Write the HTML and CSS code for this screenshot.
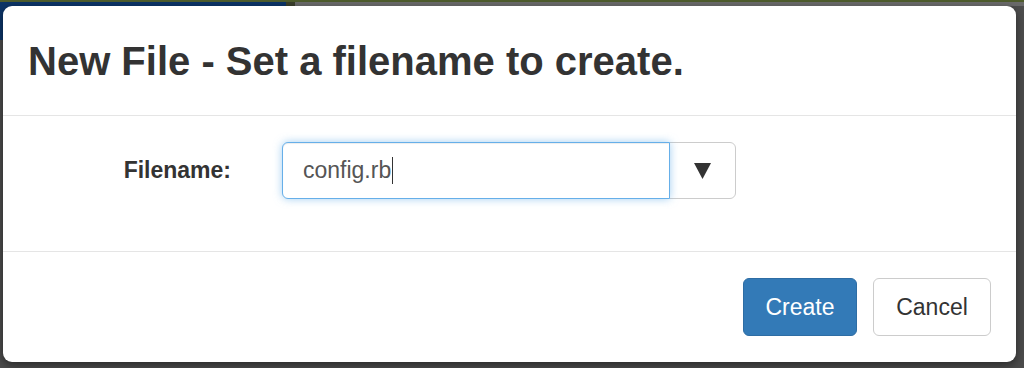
FILE: index.html
```html
<!DOCTYPE html>
<html lang="en">
<head>
    <meta charset="UTF-8">
    <meta name="viewport" content="width=device-width, initial-scale=1.0">
    <title>New File</title>
    <link rel="stylesheet" href="styles.css">
</head>
<body>
    <div class="page-behind">
        <div class="topbar">
            <div class="topbar-brand"></div>
            <div class="topbar-split"></div>
            <div class="topbar-rest"></div>
        </div>
    </div>

    <div class="modal">
        <div class="modal-header">
            <h3 class="modal-title">New File - Set a filename to create.</h3>
        </div>

        <div class="modal-body">
            <label class="field-label" for="filename">Filename:</label>
            <div class="input-group">
                <div class="form-control" id="filename">config.rb<span class="caret-line"></span></div>
                <button class="btn btn-default btn-toggle" type="button">
                    <svg width="17" height="16" viewBox="0 0 17 16">
                        <polygon points="0,0 17,0 8.5,16" fill="#333"/>
                    </svg>
                </button>
            </div>
        </div>

        <div class="modal-footer">
            <button class="btn btn-primary btn-create" type="button">Create</button>
            <button class="btn btn-default btn-cancel" type="button">Cancel</button>
        </div>
    </div>
</body>
</html>
```

FILE: styles.css
```css
* {
    margin: 0;
    padding: 0;
    box-sizing: border-box;
}

html, body {
    height: 100%;
}

body {
    font-family: "Liberation Sans", Arial, Helvetica, sans-serif;
    background-color: #4b4b4b;
    color: #333;
    overflow: hidden;
}

.page-behind {
    height: 100%;
    border-top: 2px solid #4e5c2c;
}

.topbar {
    display: flex;
    height: 38px;
}

.topbar-brand {
    width: 286px;
    background: #0c3467;
}

.topbar-split {
    width: 9px;
    background: #3a3f2c;
}

.topbar-rest {
    flex: 1;
    background: linear-gradient(#6a6a6a 0, #6a6a6a 4px, #4d4d4d 4px);
}

/* modal sits over the page */
.modal {
    position: absolute;
    top: 6px;
    left: 3px;
    width: 1013px;
    background: #fff;
    border-radius: 9px;
    box-shadow: 0 3px 8px rgba(0,0,0,0.45);
}

.modal-header {
    height: 110px;
    padding: 0 25px;
    display: flex;
    align-items: center;
    border-bottom: 1px solid #e5e5e5;
}

.modal-title {
    font-size: 40px;
    font-weight: 700;
    line-height: 1.1;
    color: #333;
}

.modal-body {
    display: flex;
    align-items: center;
    padding: 26px 25px 52px;
}

.field-label {
    width: 203px;
    margin-right: 51px;
    text-align: right;
    font-size: 23px;
    font-weight: 700;
}

.input-group {
    display: flex;
}

.form-control {
    width: 388px;
    height: 57px;
    padding: 0 20px;
    display: flex;
    align-items: center;
    font-size: 23px;
    color: #555;
    background: #fff;
    border: 1px solid #66afe9;
    border-radius: 6px 0 0 6px;
    box-shadow: inset 0 1px 1px rgba(0,0,0,0.075), 0 0 8px rgba(102,175,233,0.6);
    position: relative;
    z-index: 1;
}

.caret-line {
    width: 1px;
    height: 27px;
    margin-left: 1px;
    background: #333;
}

.btn {
    height: 58px;
    padding: 0 20px;
    font-family: inherit;
    font-size: 23px;
    border: 1px solid transparent;
    border-radius: 6px;
    cursor: pointer;
}

.btn-default {
    background: #fff;
    color: #333;
    border-color: #ccc;
}

.btn-primary {
    background: #337ab7;
    color: #fff;
    border-color: #2e6da4;
}

.btn-create {
    width: 114px;
}

.btn-cancel {
    width: 118px;
}

.btn-toggle {
    width: 67px;
    height: 57px;
    margin-left: -1px;
    border-radius: 0 6px 6px 0;
    display: flex;
    align-items: center;
    justify-content: center;
}

.modal-footer {
    display: flex;
    justify-content: flex-end;
    gap: 16px;
    padding: 26px 25px 26px;
    border-top: 1px solid #e5e5e5;
}
```
